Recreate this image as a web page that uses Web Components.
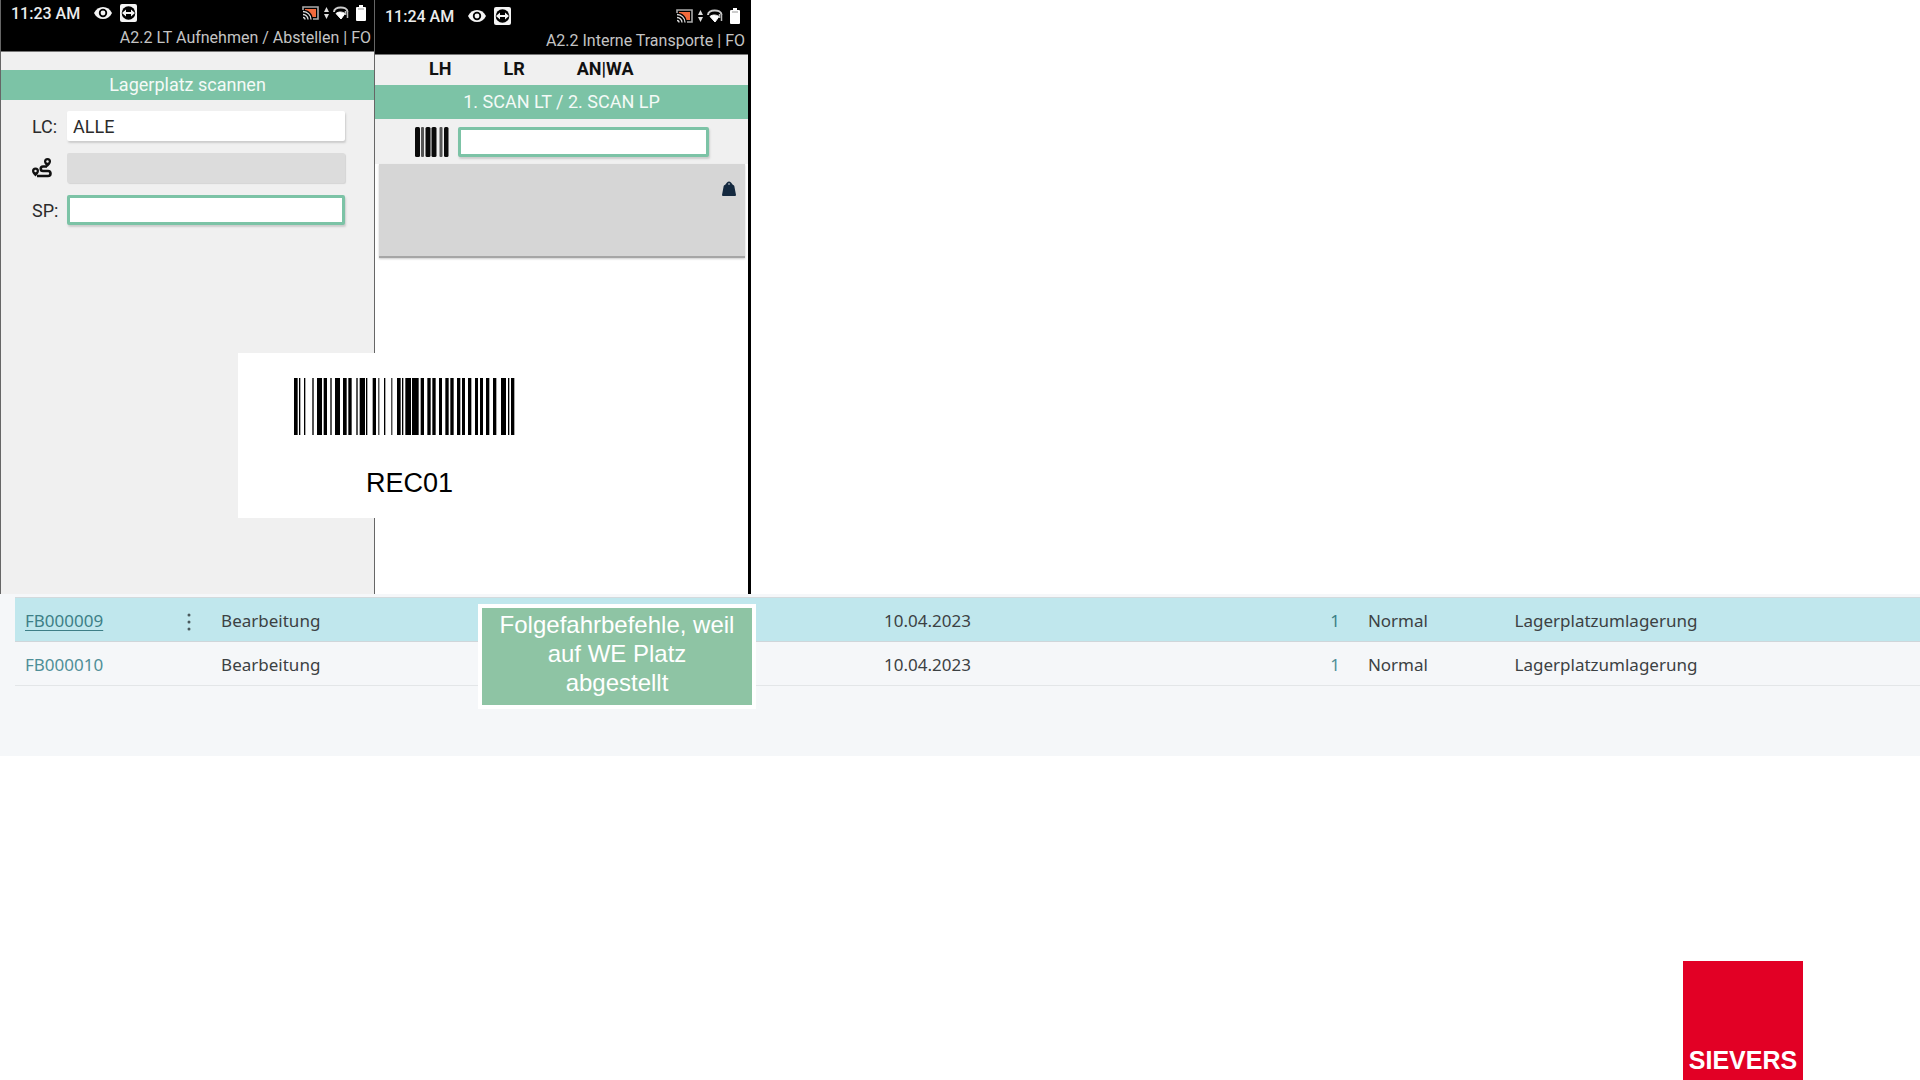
<!DOCTYPE html>
<html lang="de">
<head>
<meta charset="utf-8">
<title>Lagerplatz scannen</title>
<style>
  body {
    margin: 0;
    background: #fff;
  }
</style>
</head>
<body>
<scan-board></scan-board>

<script>
// Small helper: every element clones its template into an open shadow root
const define = (name, html, setup) => {
  const template = document.createElement("template");
  template.innerHTML = html;

  customElements.define(
    name,
    class extends HTMLElement {
      constructor() {
        super();
        this.attachShadow({ mode: "open" });
        this.shadowRoot.appendChild(template.content.cloneNode(true));
      }

      connectedCallback() {
        if (setup) setup(this, this.shadowRoot);
      }
    }
  );
};

// Status bar
define("status-bar", `
  <style>
    :host {
      display: block;
      box-sizing: border-box;
      background: #000;
      color: #ececec;
      padding: var(--bar-top, 3px) 3px 3px 10px;
      border-bottom: 1px solid #777;
      font-family: Roboto, sans-serif;
      font-size: 16px;
    }
    .row {
      display: flex;
      align-items: center;
      height: 20px;
      padding-right: 5px;
    }
    .time {
      font-weight: 500;
      margin-right: 14px;
    }
    .left { margin-right: 8px; }
    .cast { margin-left: auto; margin-right: 5px; }
    .arrows { margin-right: 4px; }
    .wifi { margin-right: 7px; }
    .title {
      color: #c4c4c4;
      line-height: 20px;
      margin-top: 5px;
      text-align: right;
      white-space: nowrap;
    }
    svg { display: block; flex: none; }
  </style>
  <div class="row">
    <span class="time"></span>
    <svg class="left" width="18" height="14" viewBox="0 0 18 14">
      <path d="M0 7C2 3 5 1 9 1s7 2 9 6c-2 4-5 6-9 6S2 11 0 7z" fill="#f4f4f4"/>
      <circle cx="9" cy="7" r="4.200" fill="#000"/>
      <circle cx="9" cy="7" r="2.400" fill="#f4f4f4"/>
    </svg>
    <svg width="17" height="18" viewBox="0 0 17 18">
      <rect width="17" height="18" rx="2" fill="#f4f4f4"/>
      <circle cx="8.500" cy="9" r="6.800" fill="#000"/>
      <path d="M2 9l4-3.500v2.500h5V5.500L15 9l-4 3.500V10H6v2.500z" fill="#f4f4f4"/>
    </svg>
    <svg class="cast" width="17" height="14" viewBox="0 0 17 14">
      <path d="M1 4V1h15v12h-5" fill="none" stroke="#aaa" stroke-width="1.600"/>
      <path d="M3 3h11v8h-3.500C10 7.500 7 4.500 3 4z" fill="#f26a3c"/>
      <path d="M1 5.500a8 8 0 0 1 8 8M1 8.500a5 5 0 0 1 5 5M1 11.500a2 2 0 0 1 2 2" fill="none" stroke="#ddd" stroke-width="1.300"/>
    </svg>
    <svg class="arrows" width="5" height="12" viewBox="0 0 5 12" fill="#ddd">
      <path d="M0 5L2.500 0 5 5zM0 7h5l-2.500 5z"/>
    </svg>
    <svg class="wifi" width="16" height="14" viewBox="0 0 16 14">
      <path d="M1 6C1 0 14 0 14.500 5.500" fill="none" stroke="#ccc" stroke-width="2"/>
      <path d="M3 7.500c2.500-2 6-2 9 0L8 13z" fill="#fff" stroke="#fff"/>
      <path d="M12.500 5v4M14.500 5v7" stroke="#bbb" stroke-width="1.500"/>
    </svg>
    <svg width="10" height="16" viewBox="0 0 10 16">
      <path d="M3 0h4v2h2q1 0 1 1v12q0 1-1 1H1q-1 0-1-1V3q0-1 1-1h2z" fill="#fff"/>
      <path d="M2 4h6" stroke="#999"/>
    </svg>
  </div>
  <div class="title"><slot></slot></div>
`, (host, root) => {
  root.querySelector(".time").textContent = host.getAttribute("time");
});

// Green heading band
define("scan-heading", `
  <style>
    :host {
      display: block;
      background: #7cc3a6;
      color: #f4faf7;
      font-family: Roboto, sans-serif;
      font-size: 18px;
      line-height: var(--band, 30px);
      text-align: center;
    }
  </style>
  <slot></slot>
`);

// Label and text box
define("scan-field", `
  <style>
    :host {
      display: flex;
      align-items: center;
      font-family: Roboto, sans-serif;
      font-size: 18px;
      color: #2b2b2b;
    }
    label {
      flex: none;
      width: var(--label, 35px);
    }
    input {
      box-sizing: border-box;
      flex: 1;
      min-width: 0;
      height: 30px;
      margin: 0;
      padding: 0 6px;
      border: 0;
      border-radius: 2px;
      background: #fff;
      box-shadow: 1px 2px 2px #ccc;
      color: #2b2b2b;
      font: inherit;
      outline: 0;
    }
    input:disabled { background: #dcdcdc; box-shadow: 1px 1px 1px #d4d4d4; }
    :host([active]) input { border: 3px solid #7cc3a6; }
  </style>
  <label for="box"><slot></slot></label>
  <input id="box" type="text">
`, (host, root) => {
  const input = root.querySelector("input");
  input.value = host.getAttribute("value") || "";
  input.disabled = host.hasAttribute("disabled");
});

// First device: pick up / put down
define("pickup-screen", `
  <style>
    :host {
      display: block;
      box-sizing: border-box;
      background: #f0f0f0;
      border-left: 1px solid #666;
    }
    scan-heading { margin-top: 18px; }
    form {
      display: flex;
      flex-direction: column;
      gap: 12px;
      padding: 11px 29px 0 31px;
    }
    svg { display: block; }
  </style>
  <status-bar time="11:23 AM">A2.2 LT Aufnehmen / Abstellen | FO</status-bar>
  <scan-heading>Lagerplatz scannen</scan-heading>
  <form>
    <scan-field value="ALLE">LC:</scan-field>
    <scan-field disabled>
      <svg width="20" height="20" viewBox="0 0 20 20" role="img" aria-label="Route">
        <path d="M3.500 9.500a3.500 3.500 0 0 1 3.500 3.500c0 2-2 4-3.500 5.500C2 17 0 15 0 13a3.500 3.500 0 0 1 3.500-3.500z" fill="#111"/>
        <circle cx="3.500" cy="13" r="1.200" fill="#f0f0f0"/>
        <path d="M15.500 0A3.500 3.500 0 0 1 19 3.500c0 2-2 4-3.500 5.500C14 7.500 12 5.500 12 3.500A3.500 3.500 0 0 1 15.500 0z" fill="#111"/>
        <circle cx="15.500" cy="3.500" r="1.200" fill="#f0f0f0"/>
        <path d="M15 8.500h-4a2.200 2.200 0 0 0 0 4.500h5a2.500 2.500 0 0 1 0 5H5" fill="none" stroke="#111" stroke-width="2.600"/>
      </svg>
    </scan-field>
    <scan-field active>SP:</scan-field>
  </form>
`);

// Second device: internal transports
define("transport-screen", `
  <style>
    :host {
      display: flex;
      flex-direction: column;
      box-sizing: border-box;
      background: #fff;
      border-left: 1px solid #666;
      border-right: 3px solid #000;
      --bar-top: 6px;
      --band: 34px;
    }
    .head { background: #f0f0f0; }
    nav {
      display: flex;
      gap: 52px;
      height: 30px;
      padding-left: 54px;
    }
    button {
      border: 0;
      padding: 0;
      margin: 0 0 3px;
      background: none;
      color: #111;
      font: 700 18px Roboto, sans-serif;
    }
    scan-field {
      --label: 43px;
      padding: 8px 39px 7px 40px;
    }
    .load {
      display: flex;
      justify-content: flex-end;
      box-sizing: border-box;
      min-height: 94px;
      margin: 0 3px 0 4px;
      padding: 17px 9px;
      background: #d6d6d6;
      border-bottom: 2px solid #a6a6a6;
      box-shadow: 0 1px 2px #ccc;
    }
    svg { display: block; }
  </style>
  <div class="head">
    <status-bar time="11:24 AM">A2.2 Interne Transporte | FO</status-bar>
    <nav>
      <button type="button">LH</button>
      <button type="button">LR</button>
      <button type="button">AN|WA</button>
    </nav>
    <scan-heading>1. SCAN LT / 2. SCAN LP</scan-heading>
    <scan-field active>
      <svg width="34" height="30" viewBox="0 0 34 30" role="img" aria-label="Barcode">
        <g fill="#0a0a0a">
          <rect x="0" width="5" height="30" rx="1.500"/>
          <rect x="10.500" width="5" height="30" rx="1.500"/>
          <rect x="16.500" width="5" height="30" rx="1.500"/>
          <rect x="29" width="4.500" height="30" rx="1.500"/>
        </g>
        <g fill="#555">
          <rect x="6" width="3" height="30" rx="1"/>
          <rect x="24.500" width="3" height="30" rx="1"/>
        </g>
      </svg>
    </scan-field>
  </div>
  <div class="load">
    <svg width="14" height="15" viewBox="0 0 14 15" role="img" aria-label="Gewicht">
      <path d="M3 4L5 1.500Q7-.5 9 1.500L11 4q1 0 1.300 1L14 14q0 1-1 1H1q-1 0-1-1L1.700 5Q2 4 3 4z" fill="#14293f"/>
      <circle cx="7" cy="2.900" r="1" fill="#8d99a5"/>
    </svg>
  </div>
`);

// Barcode label, bars are [start, end]
const bars = [
  [0, 11], [15, 19], [30, 34], [55, 59], [69, 84], [89, 99], [109, 113],
  [123, 138], [147, 158], [163, 173], [187, 191], [197, 213], [216, 220],
  [236, 246], [253, 256], [270, 274], [292, 295], [309, 320], [324, 328],
  [334, 351], [354, 374], [380, 390], [400, 410], [415, 425], [435, 444],
  [454, 464], [469, 479], [489, 499], [504, 513], [522, 532], [543, 552],
  [558, 567], [576, 586], [597, 607], [621, 636], [642, 646], [651, 661]
];

define("barcode-card", `
  <style>
    :host {
      display: flex;
      flex-direction: column;
      align-items: center;
      box-sizing: border-box;
      padding: 25px 0 20px;
      background: #fff;
      color: #000;
      font-family: "Liberation Sans", Arial, sans-serif;
      font-size: 27px;
      line-height: 30px;
    }
    svg { display: block; margin-bottom: 33px; }
    span { padding-left: 10px; }
  </style>
  <svg width="221" height="57" viewBox="0 0 663 171" role="img" aria-label="Barcode"><path/></svg>
  <span><slot></slot></span>
`, (host, root) => {
  root.querySelector("path").setAttribute(
    "d",
    bars.map(([from, to]) => `M${from} 0H${to}V171H${from}z`).join("")
  );
});

// Order list
const orders = [
  ["FB000009", "Bearbeitung", "10.04.2023", "1", "Normal", "Lagerplatzumlagerung"],
  ["FB000010", "Bearbeitung", "10.04.2023", "1", "Normal", "Lagerplatzumlagerung"]
];

define("order-list", `
  <style>
    :host {
      display: block;
      box-sizing: border-box;
      padding: 3px 0 70px 15px;
      background: #f5f7f9;
      font-family: "Noto Sans", "Open Sans", sans-serif;
      font-size: 17px;
      color: #3c4143;
    }
    table {
      width: 100%;
      table-layout: fixed;
      border-collapse: separate;
      border-spacing: 0;
      border-top: 1px solid #d3dadd;
    }
    td {
      box-sizing: border-box;
      height: 44px;
      padding: 2px 8px 0;
      border-bottom: 1px solid #e3e6e8;
      white-space: nowrap;
      line-height: 24px;
    }
    tr.selected td {
      background: #c0e7ed;
      border-bottom-color: #cfd6da;
    }
    td:first-child { padding-left: 10px; }
    td.num { text-align: right; padding-right: 20px; }
    .menu { text-align: center; }
    a { color: #4f8f98; text-decoration: none; }
    .selected a { color: #3d7f87; }
    .selected td:first-child a {
      text-decoration: underline;
      text-underline-offset: 3px;
    }
    button {
      border: 0;
      padding: 0;
      background: none;
      vertical-align: middle;
    }
    svg { display: block; }
  </style>
  <table>
    <colgroup>
      <col style="width: 7.900%"><col style="width: 2.500%"><col style="width: 34.800%">
      <col style="width: 12.600%"><col style="width: 12.800%"><col style="width: 7.700%"><col>
    </colgroup>
    <tbody></tbody>
  </table>
`, (host, root) => {
  const menu = `
    <button type="button" aria-label="Weitere Optionen">
      <svg width="4" height="18" viewBox="0 0 4 18" fill="#4a5a5d">
        <circle cx="2" cy="2" r="1.500"/><circle cx="2" cy="9" r="1.500"/><circle cx="2" cy="16" r="1.500"/>
      </svg>
    </button>`;
  root.querySelector("tbody").innerHTML = orders
    .map(([no, state, date, count, prio, type], i) => `
      <tr class="${i === 0 ? "selected" : ""}">
        <td><a href="#${no}">${no}</a></td>
        <td class="menu">${i === 0 ? menu : ""}</td>
        <td>${state}</td>
        <td>${date}</td>
        <td class="num"><a href="#${no}">${count}</a></td>
        <td>${prio}</td>
        <td>${type}</td>
      </tr>`)
    .join("");
});

// Note laid over the list
define("callout-note", `
  <style>
    :host {
      display: block;
      box-sizing: border-box;
      border: 4px solid #fff;
      background: #8ec4a4;
      color: #fff;
      padding: 2px 16px 8px;
      font-family: "Liberation Sans", Arial, sans-serif;
      font-size: 24px;
      line-height: 29px;
      text-align: center;
    }
  </style>
  <slot></slot>
`);

// Company logo
define("company-logo", `
  <style>
    :host {
      display: flex;
      align-items: flex-end;
      justify-content: center;
      box-sizing: border-box;
      width: 120px;
      height: 119px;
      padding-bottom: 6px;
      background: #e20025;
      color: #fff;
      font-family: "Liberation Sans", Arial, sans-serif;
      font-size: 25px;
      font-weight: 700;
      line-height: 28px;
    }
  </style>
  <slot></slot>
`);

// Page
define("scan-board", `
  <style>
    :host {
      display: flex;
      flex-direction: column;
      min-height: 100vh;
    }
    .devices {
      position: relative;
      display: grid;
      grid-template-columns: 374fr 377fr 1169fr;
      min-height: 55vh;
    }
    .orders { position: relative; }
    /* the label and the note lie over the screens and the list */
    barcode-card {
      position: absolute;
      left: 238px;
      top: 353px;
      width: 333px;
    }
    callout-note {
      position: absolute;
      left: 478px;
      top: 10px;
      width: 278px;
    }
    footer {
      display: flex;
      justify-content: flex-end;
      margin-top: auto;
      padding-right: 117px;
    }
  </style>
  <section class="devices">
    <pickup-screen></pickup-screen>
    <transport-screen></transport-screen>
    <barcode-card>REC01</barcode-card>
  </section>
  <section class="orders">
    <order-list></order-list>
    <callout-note>Folgefahrbefehle, weil auf WE Platz abgestellt</callout-note>
  </section>
  <footer>
    <company-logo>SIEVERS</company-logo>
  </footer>
`);
</script>
</body>
</html>
